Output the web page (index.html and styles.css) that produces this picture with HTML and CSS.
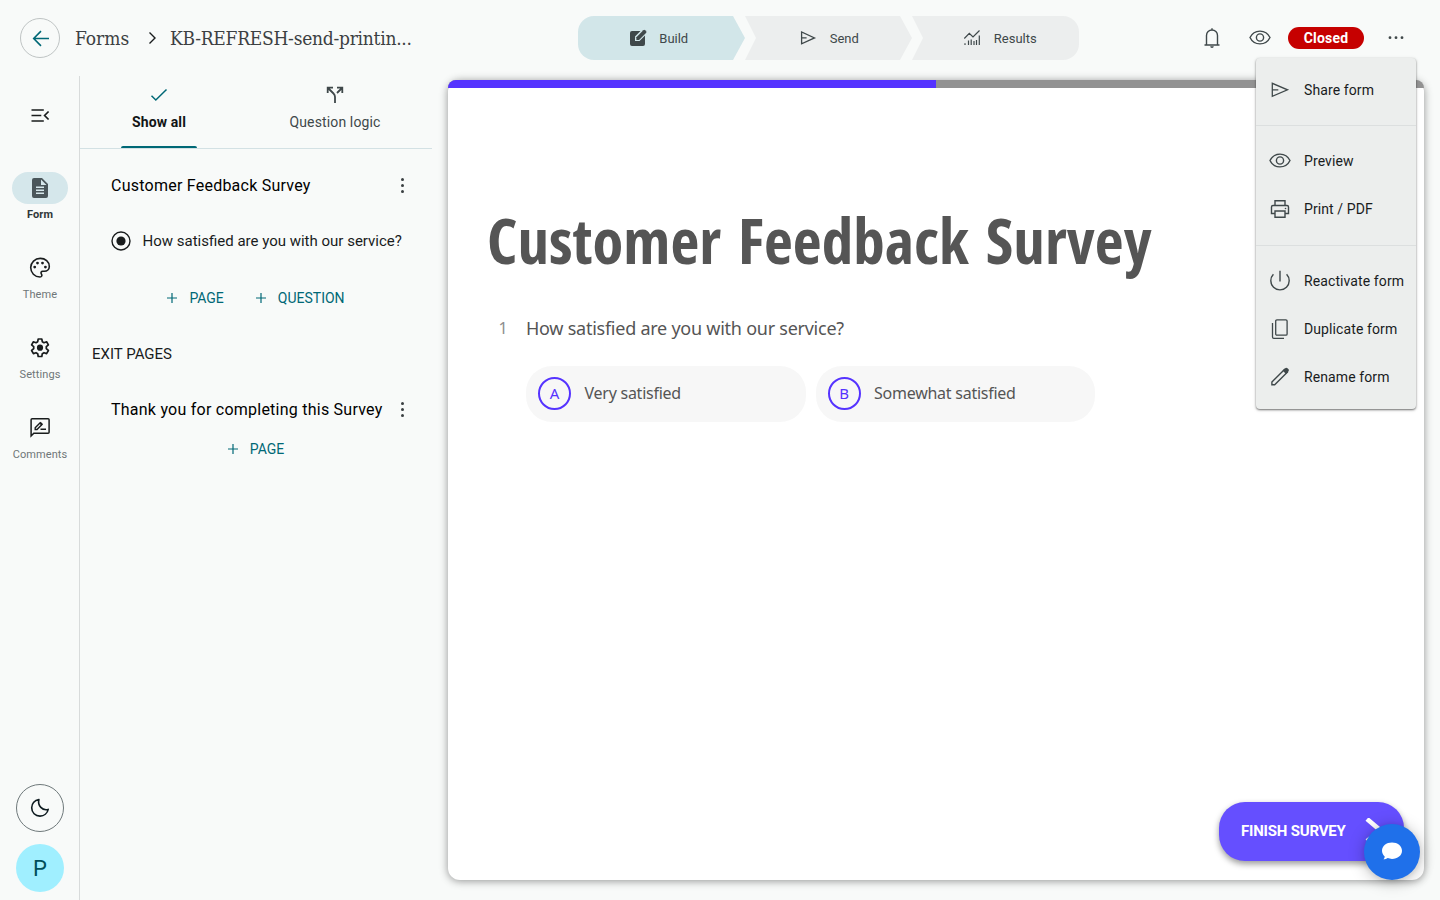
FILE: index.html
```html
<!DOCTYPE html>
<html lang="en">
<head>
	<meta charset="UTF-8">
	<meta name="viewport" content="width=device-width, initial-scale=1.0">
	<title>Customer Feedback Survey</title>

	<link rel="stylesheet" href="styles.css">
</head>
<body>
	<header class="topbar">
		<div class="breadcrumb">
			<a class="back-btn">
				<svg width="24" height="24" viewBox="0 0 24 24"><path d="M21 12.500H6M13 5.100 5.700 12.500l7.300 7.400" fill="none" stroke="currentColor" stroke-width="1.600"/></svg>
			</a>
			<span class="crumb crumb-home">Forms</span>
			<svg class="crumb-arrow" width="12" height="14" viewBox="0 0 12 14"><path d="m3.500 1.500 5.500 5.500-5.500 5.500" fill="none" stroke="currentColor" stroke-width="1.400"/></svg>
			<span class="crumb crumb-name">KB-REFRESH-send-printin...</span>
		</div>

		<nav class="steps">
			<a class="step step-first active">
				<svg width="20" height="20" viewBox="0 0 20 20"><path d="M4 3h8.500L7 8.500V13h4.500L17 7.500V16a2 2 0 0 1-2 2H4a2 2 0 0 1-2-2V5a2 2 0 0 1 2-2z"/><path d="M8.400 9.200 15.300 2.300a1.300 1.300 0 0 1 1.800 0l.9.900a1.300 1.300 0 0 1 0 1.800L11 11.900H8.400z"/></svg>
				<span>Build</span>
			</a>
			<a class="step step-middle">
				<svg width="20" height="20" viewBox="0 0 20 20"><path d="M3.600 4v11.800L16.500 9.900zM3.600 9.900h5" fill="none" stroke="currentColor" stroke-width="1.300"/></svg>
				<span>Send</span>
			</a>
			<a class="step step-last">
				<svg width="20" height="20" viewBox="0 0 20 20"><path d="m2.300 10.500 5-5.200 3.700 3.700 6.500-6.500M3 17v-1.800M6.500 17v-4.500M9.200 17v-5.500M12 17v-4M14.500 17v-5M17.300 17V7.500" fill="none" stroke="currentColor" stroke-width="1.200"/></svg>
				<span>Results</span>
			</a>
		</nav>

		<div class="actions">
			<svg width="24" height="24" viewBox="0 0 24 24"><path d="M4.500 19h15M6.500 19V9.500a5.500 5.500 0 0 1 11 0V19M12 4V2.300" fill="none" stroke="currentColor" stroke-width="1.400"/><path d="M10.200 20.300h3.600a1.800 1.800 0 0 1-3.600 0z"/></svg>
			<svg width="24" height="24" viewBox="0 0 24 24"><use href="#eye"/></svg>
			<span class="status">Closed</span>
			<svg width="24" height="24" viewBox="0 0 24 24"><circle cx="6" cy="11.700" r="1.400"/><circle cx="12" cy="11.700" r="1.400"/><circle cx="18" cy="11.700" r="1.400"/></svg>

			<!-- form menu -->
			<ul class="menu">
				<li><svg width="24" height="24" viewBox="0 0 24 24"><path d="M4.300 5.300v13L19.500 11.800zM4.300 11.800h6" fill="none" stroke="currentColor" stroke-width="1.300"/></svg>Share form</li>
				<li class="divider"></li>
				<li><svg width="24" height="24" viewBox="0 0 24 24"><g id="eye" fill="none" stroke="currentColor" stroke-width="1.400"><path d="M2 11.500C4 7.400 7.700 5.100 12 5.100s8 2.300 10 6.400c-2 4.100-5.700 6.400-10 6.400s-8-2.300-10-6.400z"/><circle cx="12" cy="11.500" r="3.600"/></g></svg>Preview</li>
				<li><svg width="24" height="24" viewBox="0 0 24 24"><path d="M7 8.500V3.700h10v4.800M7 16.500H3.500V10A1.500 1.500 0 0 1 5 8.500h14a1.500 1.500 0 0 1 1.500 1.500v6.500H17M7 14h10v6.300H7z" fill="none" stroke="currentColor" stroke-width="1.400"/><circle cx="17.500" cy="11.500" r=".8"/></svg>Print / PDF</li>
				<li class="divider"></li>
				<li><svg width="24" height="24" viewBox="0 0 24 24"><path d="M12 1.800v10.700M5.400 5.300a9.200 9.200 0 1 0 13.200 0" fill="none" stroke="currentColor" stroke-width="1.400"/></svg>Reactivate form</li>
				<li><svg width="24" height="24" viewBox="0 0 24 24"><path d="M8.900 2.800h9a1.200 1.200 0 0 1 1.200 1.200v13a1.200 1.200 0 0 1-1.200 1.200h-9A1.200 1.200 0 0 1 7.700 17V4a1.200 1.200 0 0 1 1.200-1.200zM4.500 6v14a1.300 1.300 0 0 0 1.300 1.300H16" fill="none" stroke="currentColor" stroke-width="1.300"/></svg>Duplicate form</li>
				<li><svg width="24" height="24" viewBox="0 0 24 24"><path d="M3.900 17 16.500 4.500l2.800 2.800L6.700 19.800H3.900z" fill="none" stroke="currentColor" stroke-width="1.400"/><path d="m14.600 5.600 2.300-2.200c.9-.9 1.800-.9 2.600-.1l.8.800c.8.800.8 1.700-.1 2.600L18 8.900z"/></svg>Rename form</li>
			</ul>
		</div>
	</header>

	<div class="workspace">
		<aside class="sidebar">
			<svg class="collapse" width="20" height="20" viewBox="0 0 20 20"><path d="M1.500 5h12.300M1.500 10.500h9.800M1.500 16h12.300M18.600 6.500 14.600 10.500l4 4" fill="none" stroke="currentColor" stroke-width="1.700"/></svg>

			<nav class="side-nav">
				<a class="side-item active">
					<span class="side-icon"><svg width="24" height="24" viewBox="0 0 24 24"><path d="M14 2H6a2 2 0 0 0-2 2v16a2 2 0 0 0 2 2h12a2 2 0 0 0 2-2V8zm2 16H8v-1.500h8zm0-3H8v-1.500h8zm0-3H8v-1.500h8zm-3-3V3.500L18.500 9z"/></svg></span>
					<span>Form</span>
				</a>
				<a class="side-item">
					<span class="side-icon"><svg width="24" height="24" viewBox="0 0 24 24"><path d="M12 21C6.700 21 2.700 16.800 2.700 11.600S7 2.400 12.300 2.400c5 0 9 3.400 9 8 0 2.900-2.200 4.900-5 4.900h-1.600c-1.500 0-2.200 1.500-1.300 2.600 1.100 1.400.3 3.100-1.400 3.100z" fill="none" stroke="currentColor" stroke-width="1.600"/><circle cx="6.700" cy="11.100" r="1.400"/><circle cx="9.500" cy="7.100" r="1.400"/><circle cx="14.500" cy="7.100" r="1.400"/><circle cx="17.400" cy="11.100" r="1.400"/></svg></span>
					<span>Theme</span>
				</a>
				<a class="side-item">
					<span class="side-icon"><svg width="24" height="24" viewBox="0 0 24 24"><path d="M10.200 3h3.600l.5 2.700 1.700 1 2.600-.9 1.800 3.100-2.100 1.800v2l2.100 1.800-1.800 3.100-2.600-.9-1.700 1-.5 2.800h-3.600l-.5-2.800-1.700-1-2.600.9-1.800-3.100 2.100-1.800v-2L3.600 8.900l1.800-3.100 2.600.9 1.700-1z" fill="none" stroke="currentColor" stroke-width="1.700" stroke-linejoin="round"/><circle cx="12" cy="11.700" r="3.100"/></svg></span>
					<span>Settings</span>
				</a>
				<a class="side-item">
					<span class="side-icon"><svg width="24" height="24" viewBox="0 0 24 24"><path d="M3.100 20V3.800a1 1 0 0 1 1-1h16a1 1 0 0 1 1 1v12.400a1 1 0 0 1-1 1H5.800z" fill="none" stroke="currentColor" stroke-width="1.500"/><path d="m7.200 11.700 5-5 1.800 1.800-5 5H7.200zM12.500 13.300H18" fill="none" stroke="currentColor" stroke-width="1.400"/><path d="m11.300 7.600 1.500-1.500 2 2-1.500 1.500z"/></svg></span>
					<span>Comments</span>
				</a>
			</nav>

			<div class="side-bottom">
				<button class="theme-toggle"><svg width="24" height="24" viewBox="0 0 24 24"><path d="M10.900 3.600c-4.200.7-7.200 4-7.200 8.200 0 4.700 3.600 8.300 8.300 8.300 4 0 7.400-2.800 8.200-6.700-5.800 1.600-10.800-3.800-9.300-9.800z" fill="none" stroke="currentColor" stroke-width="1.600" stroke-linejoin="round"/></svg></button>
				<div class="avatar">P</div>
			</div>
		</aside>

		<section class="outline">
			<div class="tabs">
				<a class="tab active">
					<svg width="20" height="20" viewBox="0 0 20 20"><path d="m2.500 10.800 4.300 4.200L17.500 4.500" fill="none" stroke="currentColor" stroke-width="1.500"/></svg>
					<span>Show all</span>
				</a>
				<a class="tab">
					<svg width="20" height="20" viewBox="0 0 20 20"><path d="M2.700 8V2.700H8M3 3l5.500 5.500Q10 10 10 12v6M12 2.700h5.300V8M17 3l-5 5" fill="none" stroke="currentColor" stroke-width="1.800"/></svg>
					<span>Question logic</span>
				</a>
			</div>

			<div class="page-card">
				<span>Customer Feedback Survey</span>
				<svg width="24" height="24" viewBox="0 0 24 24"><circle cx="11.500" cy="6.500" r="1.500"/><circle cx="11.500" cy="12.500" r="1.500"/><circle cx="11.500" cy="18.500" r="1.500"/></svg>
			</div>
			<div class="question-row">
				<svg width="20" height="20" viewBox="0 0 20 20"><circle cx="10" cy="10" r="9" fill="none" stroke="currentColor" stroke-width="1.400"/><circle cx="10" cy="10" r="4.600"/></svg>
				<span>How satisfied are you with our service?</span>
			</div>
			<div class="add-row">
				<a class="add-btn"><svg width="12" height="12" viewBox="0 0 12 12"><path d="M6 1v10M1 6h10" stroke="currentColor" stroke-width="1.200"/></svg>PAGE</a>
				<a class="add-btn"><svg width="12" height="12" viewBox="0 0 12 12"><path d="M6 1v10M1 6h10" stroke="currentColor" stroke-width="1.200"/></svg>QUESTION</a>
			</div>

			<h2 class="outline-title">EXIT PAGES</h2>
			<div class="page-card exit">
				<span>Thank you for completing this Survey</span>
				<svg width="24" height="24" viewBox="0 0 24 24"><circle cx="11.500" cy="6.500" r="1.500"/><circle cx="11.500" cy="12.500" r="1.500"/><circle cx="11.500" cy="18.500" r="1.500"/></svg>
			</div>
			<div class="add-row exit">
				<a class="add-btn"><svg width="12" height="12" viewBox="0 0 12 12"><path d="M6 1v10M1 6h10" stroke="currentColor" stroke-width="1.200"/></svg>PAGE</a>
			</div>
		</section>

		<main class="preview">
			<div class="progress"><div class="progress-bar"></div></div>
			<div class="survey">
				<h1>Customer Feedback Survey</h1>
				<div class="question">
					<span class="number">1</span>
					<span>How satisfied are you with our service?</span>
				</div>
				<div class="answers">
					<div class="answer"><span class="letter">A</span><span class="label">Very satisfied</span></div>
					<div class="answer"><span class="letter">B</span><span class="label">Somewhat satisfied</span></div>
				</div>
			</div>
			<button class="finish">
				<span>FINISH SURVEY</span>
				<svg width="26" height="26" viewBox="0 0 26 26"><path d="m4 1 13.500 11.500L4 23" fill="none" stroke="currentColor" stroke-width="4.600"/></svg>
			</button>
		</main>
	</div>

	<!-- chat widget -->
	<button class="chat">
		<svg width="24" height="24" viewBox="0 0 24 24"><path d="M12 2.500c5.600 0 10 3.500 10 8.200s-4.400 8.200-10 8.200c-1.500 0-3-.3-4.300-.8-1.200.8-2.800 1.300-4.300 1.200.8-.8 1.300-1.800 1.300-2.900C3 14.900 2 12.900 2 10.700c0-4.700 4.400-8.200 10-8.200z"/></svg>
	</button>
</body>
</html>
```
FILE: styles.css
```css
*,
*::before,
*::after {
	margin: 0;
	padding: 0;
	box-sizing: border-box;
}

:root {
	--bg: #f8faf9;
	--surface: #eceeed;
	--teal: #006876;
	--teal-light: #d2e6e9;
	--text: #191c1d;
	--text-secondary: #3f484a;
	--purple: #5533ff;
}

body {
	height: 100vh;
	display: flex;
	flex-direction: column;
	overflow: hidden;
	background: var(--bg);
	color: var(--text);
	font-family: Roboto, sans-serif;
	font-size: 14px;
}

svg {
	display: block;
	flex: none;
	fill: currentColor;
}

button {
	border: 0;
	font-family: inherit;
}

/* top bar */
.topbar {
	height: 76px;
	flex: none;
	display: flex;
	align-items: center;
	padding: 0 32px 0 20px;
}

.breadcrumb {
	width: 558px;
	display: flex;
	align-items: center;
}

.back-btn {
	width: 40px;
	height: 40px;
	display: grid;
	place-items: center;
	border: 1px solid #bfc4c4;
	border-radius: 50%;
	color: var(--teal);
}

.crumb {
	color: #3c4042;
	font-family: "Roboto Slab", "DejaVu Serif Condensed", "DejaVu Serif", serif;
	font-size: 19px;
	font-weight: 300;
	line-height: 28px;
	white-space: nowrap;
}

.crumb-home {
	width: 56px;
	margin-left: 15px;
}

.crumb-name {
	letter-spacing: -0.25px;
}

.crumb-arrow {
	margin: 0 12px 0 15px;
}

/* steps */
.steps {
	display: flex;
}

.step {
	width: 167px;
	height: 44px;
	display: flex;
	align-items: center;
	justify-content: center;
	gap: 11.5px;
	background: #eceeee;
	color: var(--text-secondary);
	font-size: 13px;
}

.step.active {
	background: var(--teal-light);
}

.step-first {
	padding-right: 7px;
	border-radius: 16px 0 0 16px;
	clip-path: polygon(0 0, 155px 0, 100% 50%, 155px 100%, 0 100%);
}

.step-middle {
	clip-path: polygon(0 0, 155px 0, 100% 50%, 155px 100%, 0 100%, 11px 50%);
}

.step-last {
	padding-left: 8px;
	border-radius: 0 16px 16px 0;
	clip-path: polygon(0 0, 100% 0, 100% 100%, 0 100%, 11px 50%);
}

.actions {
	position: relative;
	margin-left: auto;
	display: flex;
	align-items: center;
	color: var(--text-secondary);
}

.actions > svg + svg {
	margin-left: 24px;
}

.status {
	width: 76px;
	margin: 0 20px 0 16px;
	border-radius: 11px;
	background: #c60000;
	color: #fff;
	font-weight: 700;
	line-height: 22px;
	text-align: center;
	letter-spacing: 0.2px;
}

.menu {
	position: absolute;
	z-index: 2;
	top: 32px;
	right: -8px;
	width: 160px;
	padding: 8px 0;
	border-radius: 4px;
	background: var(--surface);
	box-shadow: 0 1px 2px rgba(0, 0, 0, 0.5), 0 1px 4px rgba(0, 0, 0, 0.12);
	list-style: none;
}

.menu li {
	height: 48px;
	display: flex;
	align-items: center;
	gap: 12px;
	padding-left: 12px;
	white-space: nowrap;
	color: var(--text);
	letter-spacing: 0.1px;
}

.menu li svg {
	color: var(--text-secondary);
}

.menu .divider {
	height: 1px;
	margin: 11px 0;
	background: #dcdfdf;
}

.menu .divider ~ .divider {
	margin-top: 12px;
}

/* left sidebar */
.workspace {
	flex: 1;
	min-height: 0;
	display: flex;
}

.sidebar {
	width: 80px;
	display: flex;
	flex-direction: column;
	align-items: center;
	padding: 29px 0 8px 1px;
	border-right: 1px solid #d8dbdb;
}

.side-nav {
	margin-top: 47px;
}

.side-item {
	width: 78px;
	height: 80px;
	display: flex;
	flex-direction: column;
	align-items: center;
	gap: 3px;
	color: #6f7678;
	font-size: 11px;
	line-height: 16px;
	letter-spacing: 0.1px;
}

.side-icon {
	width: 56px;
	height: 32px;
	display: grid;
	place-items: center;
	border-radius: 16px;
	color: var(--text);
}

.side-item.active {
	color: #303638;
	font-weight: 700;
}

.side-item.active .side-icon {
	background: #d5e7eb;
	color: #4a565a;
}

.side-bottom {
	margin-top: auto;
}

.theme-toggle,
.avatar {
	width: 48px;
	height: 48px;
	display: grid;
	place-items: center;
	border-radius: 50%;
}

.theme-toggle {
	margin-bottom: 12px;
	border: 1px solid #6f797b;
	background: none;
	color: #0e1b20;
}

.avatar {
	background: #a0efff;
	color: #004e5a;
	font-size: 22px;
}

/* form outline */
.outline {
	width: 352px;
}

.tabs {
	height: 73px;
	display: flex;
	border-bottom: 1px solid #d3e1e4;
}

.tab {
	flex: 1;
	display: flex;
	flex-direction: column;
	align-items: center;
	gap: 8px;
	padding-top: 9px;
	padding-right: 18px;
	color: var(--text-secondary);
	line-height: 18px;
	letter-spacing: 0.13px;
}

.tab.active {
	color: #111516;
	font-weight: 700;
}

.tab.active svg {
	color: var(--teal);
}

.tab.active::after {
	content: "";
	width: 76px;
	height: 2px;
	margin-top: 7px;
	border-radius: 2px 2px 0 0;
	background: var(--teal);
}

.page-card {
	height: 52px;
	display: flex;
	align-items: center;
	justify-content: space-between;
	margin: 10px 8px 0;
	padding: 0 9.5px 0 23px;
	border-radius: 12px;
	color: #000;
	font-size: 16px;
	letter-spacing: 0.24px;
}

.page-card svg {
	color: #3a3f41;
}

.question-row {
	display: flex;
	align-items: center;
	gap: 11.5px;
	height: 40px;
	margin: 10px 0 0 31px;
	font-size: 15px;
}

.add-row {
	display: flex;
	justify-content: center;
	gap: 31px;
	margin-top: 27px;
	padding-right: 1px;
	color: var(--teal);
	line-height: 20px;
}

.add-row.exit {
	margin-top: 4px;
}

.add-btn {
	display: flex;
	align-items: center;
	gap: 11px;
}

.outline-title {
	margin: 36px 0 0 12px;
	font-size: 15px;
	font-weight: 400;
	line-height: 20px;
}

.page-card.exit {
	margin-top: 19px;
}

/* survey preview */
.preview {
	flex: 1;
	position: relative;
	margin: 4px 16px 20px;
	border-radius: 12px;
	background: #fff;
	box-shadow: 0 1px 9px rgba(0, 0, 0, 0.42);
	color: #555;
	font-family: "Noto Sans", sans-serif;
}

.progress {
	height: 7.6px;
	overflow: hidden;
	border-radius: 12px 12px 0 0;
	background: #929292;
}

.progress-bar {
	width: 50%;
	height: 100%;
	background: var(--purple);
}

.survey {
	padding: 107px 39px 0;
}

.survey h1 {
	font-family: "Open Sans", sans-serif;
	font-size: 63px;
	font-stretch: 75%;
	font-weight: 700;
	line-height: 90px;
	white-space: nowrap;
	letter-spacing: 0.02px;
	word-spacing: 5.5px;
}

.question {
	display: flex;
	align-items: center;
	margin-top: 31px;
	padding-left: 1px;
	font-size: 18px;
	line-height: 24px;
	letter-spacing: -0.25px;
}

.number {
	width: 38px;
	padding-left: 10.5px;
	color: #8e8e8e;
	font-size: 16px;
}

.answers {
	display: flex;
	gap: 10px;
	margin: 26px 0 0 39px;
}

.answer {
	width: 279.5px;
	height: 56px;
	display: flex;
	align-items: center;
	gap: 13.5px;
	padding-left: 12px;
	border-radius: 26px;
	background: #f7f7f7;
	font-size: 16px;
	letter-spacing: -0.25px;
}

.label {
	padding-bottom: 2px;
}

.letter {
	width: 33px;
	height: 33px;
	display: grid;
	place-items: center;
	padding-bottom: 1px;
	border: 2px solid var(--purple);
	border-radius: 50%;
	color: var(--purple);
	font-size: 15px;
	line-height: 20px;
}

.finish {
	position: absolute;
	right: 20px;
	bottom: 19.5px;
	width: 185px;
	height: 58.5px;
	display: flex;
	align-items: center;
	gap: 17px;
	padding-left: 22px;
	border-radius: 26px;
	background: #654fff;
	box-shadow: 0 3px 6px rgba(0, 0, 0, 0.4);
	color: #fff;
	font-family: Roboto, sans-serif;
	font-size: 15px;
	font-weight: 700;
	letter-spacing: -0.2px;
}

.chat {
	position: fixed;
	right: 20px;
	bottom: 20px;
	width: 56px;
	height: 56px;
	display: grid;
	place-items: center;
	border-radius: 50%;
	background: #1f70ea;
	box-shadow: 0 1px 6px rgba(0, 0, 0, 0.1), 0 2px 16px rgba(0, 0, 0, 0.25);
	color: #fff;
}
```
